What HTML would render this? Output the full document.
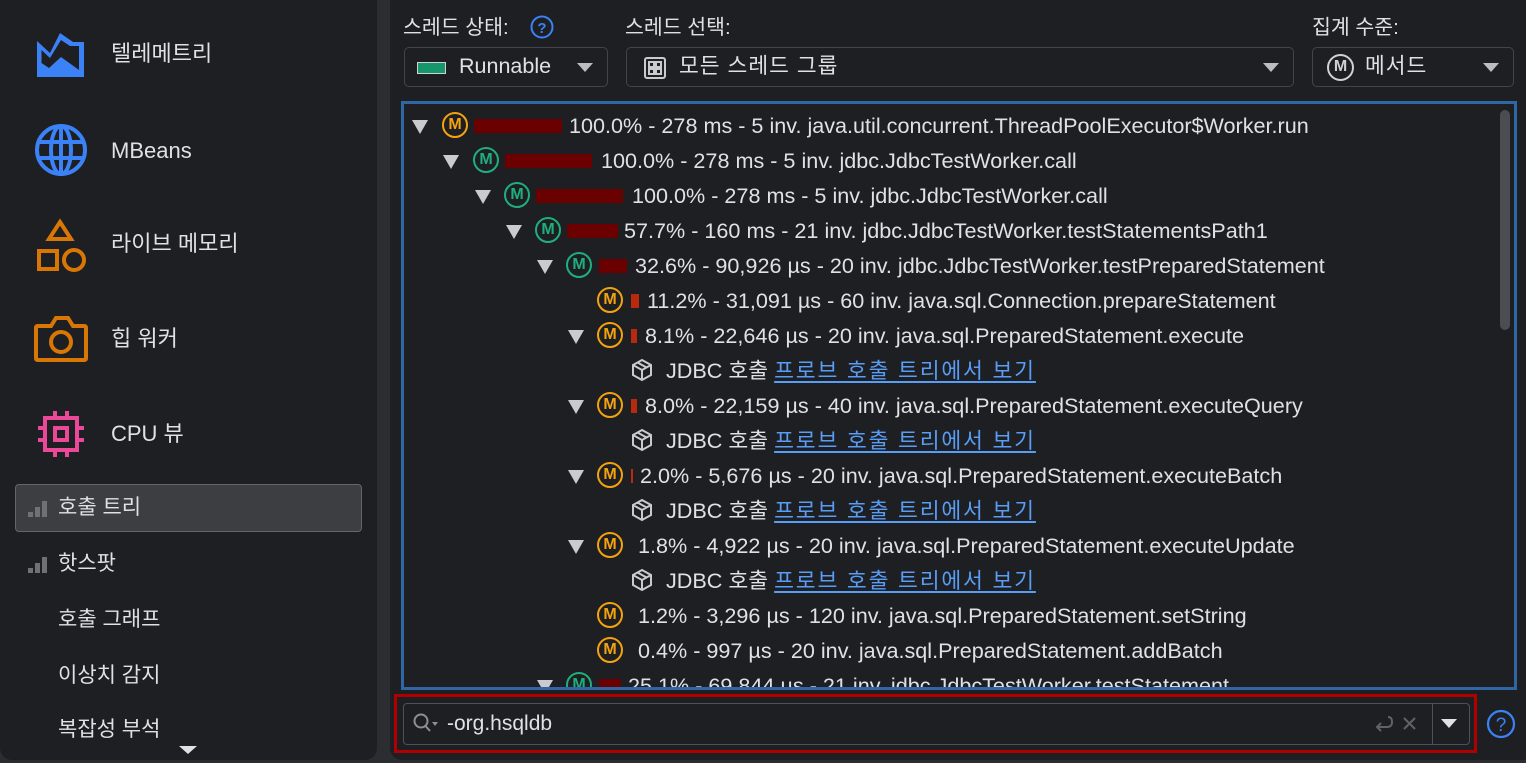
<!DOCTYPE html>
<html><head><meta charset="utf-8"><style>
*{margin:0;padding:0;box-sizing:border-box}
body{width:1526px;height:763px;background:#2b2d30;position:relative;overflow:hidden;font-family:"Liberation Sans","Noto Sans CJK KR",sans-serif;color:#dfe1e5}
.abs{position:absolute}
#left{left:0;top:-10px;width:377px;height:770px;background:#1e1f22;border-radius:12px}
#right{left:390px;top:-10px;width:1146px;height:770px;background:#1e1f22;border-radius:12px}
.nav{position:absolute;left:111px;font-size:22px;line-height:28px}
.sub{position:absolute;left:58px;font-size:21px;line-height:28px}
.lbl{position:absolute;font-size:20.5px;line-height:26px;top:15px}
.combo{position:absolute;top:47px;height:40px;border:1.5px solid #43454a;border-radius:5px;background:#1e1f22;font-size:21.5px;line-height:37px}
.dd{position:absolute;right:14px;top:15px;width:0;height:0;border-left:8px solid transparent;border-right:8px solid transparent;border-top:9px solid #bbbdc0}
#tree{left:401px;top:101px;width:1116px;height:589px;border:3px solid #2f67a6;overflow:hidden}
.row{position:absolute;height:26px;line-height:26px;font-size:21.6px;white-space:nowrap}
.tri{position:absolute;width:0;height:0;border-left:8px solid transparent;border-right:8px solid transparent;border-top:14px solid #c9cbce}
.m{position:absolute;width:26px;height:26px;border-radius:50%;border:2.5px solid;font-weight:bold;font-size:16px;line-height:21px;text-align:center;font-family:"Liberation Sans",sans-serif}
.o{color:#f2a30f;border-color:#f2a30f}
.g{color:#1faf7c;border-color:#1faf7c}
.bar{position:absolute;height:14px;background:#6b0000}
.a{color:#589df6;text-decoration:underline;text-underline-offset:3px;letter-spacing:1.8px}
.k{letter-spacing:1px}
</style></head><body>
<div id="left" class="abs"></div>
<div id="right" class="abs"></div>

<svg class="abs" style="left:36px;top:31px" width="50" height="47" viewBox="0 0 50 47"><path d="M1 10 L14 22 L24 2 L37 11 L48 11 L48 46 L1 46 Z" fill="#3b82f6"/><path d="M5.5 19 L14 27 L25 9 L34 15 L43 15 L43 39 L25 26 L13 37 L5.5 32 Z" fill="#1e1f22"/></svg>
<div class="nav" style="top:40px">텔레메트리</div>
<svg class="abs" style="left:33px;top:122px" width="56" height="56" viewBox="0 0 56 56" fill="none" stroke="#3b82f6" stroke-width="4"><circle cx="28" cy="28" r="24"/><ellipse cx="28" cy="28" rx="10" ry="24"/><line x1="4" y1="20" x2="52" y2="20"/><line x1="4" y1="36" x2="52" y2="36"/><line x1="28" y1="4" x2="28" y2="52"/></svg>
<div class="nav" style="top:137px">MBeans</div>
<svg class="abs" style="left:36px;top:218px" width="52" height="54" viewBox="0 0 52 54" fill="none" stroke="#d97706" stroke-width="4"><path d="M24 4 L35 21 L13 21 Z"/><rect x="3" y="33" width="18" height="18"/><circle cx="38" cy="42" r="10"/></svg>
<div class="nav" style="top:230px">라이브 메모리</div>
<svg class="abs" style="left:34px;top:314px" width="54" height="50" viewBox="0 0 54 50" fill="none" stroke="#d97706" stroke-width="4"><path d="M4 12 L17 12 L22 4 L34 4 L39 12 L50 12 Q52 12 52 14 L52 44 Q52 46 50 46 L4 46 Q2 46 2 44 L2 14 Q2 12 4 12 Z"/><circle cx="27" cy="28" r="10"/></svg>
<div class="nav" style="top:325px">힙 워커</div>
<svg class="abs" style="left:36px;top:409px" width="50" height="50" viewBox="0 0 50 50" fill="none" stroke="#ec4899" stroke-width="4"><rect x="9" y="9" width="32" height="32"/><rect x="19" y="19" width="12" height="12"/><path d="M19 2v7M31 2v7M19 41v7M31 41v7M2 19h7M2 31h7M41 19h7M41 31h7"/></svg>
<div class="nav" style="top:420px">CPU 뷰</div>

<div class="abs" style="left:15px;top:484px;width:347px;height:48px;background:#3c3e41;border:1.5px solid #62656a;border-radius:4px"></div>
<svg class="abs" style="left:28px;top:499px" width="20" height="20"><rect x="0" y="13" width="5" height="5" fill="#6f7175"/><rect x="7" y="8" width="5" height="10" fill="#6f7175"/><rect x="14" y="2" width="5" height="16" fill="#6f7175"/></svg>
<div class="sub" style="top:494px">호출 트리</div>
<svg class="abs" style="left:28px;top:555px" width="20" height="20"><rect x="0" y="13" width="5" height="5" fill="#6f7175"/><rect x="7" y="8" width="5" height="10" fill="#6f7175"/><rect x="14" y="2" width="5" height="16" fill="#6f7175"/></svg>
<div class="sub" style="top:550px">핫스팟</div>
<div class="sub" style="top:606px">호출 그래프</div>
<div class="sub" style="top:662px">이상치 감지</div>
<div class="sub" style="top:716px;height:24px;overflow:hidden">복잡성 부석</div>
<div class="abs" style="left:179px;top:746px;width:0;height:0;border-left:9px solid transparent;border-right:9px solid transparent;border-top:8px solid #dfe1e5"></div>

<div class="lbl" style="left:403px">스레드 상태:</div>
<svg class="abs" style="left:530px;top:15px" width="24" height="24"><circle cx="12" cy="12" r="10.5" fill="none" stroke="#3b82f6" stroke-width="2"/><text x="12" y="18" font-size="15" font-weight="bold" fill="#3b82f6" text-anchor="middle" font-family="Liberation Sans">?</text></svg>
<div class="lbl" style="left:625px">스레드 선택:</div>
<div class="lbl" style="left:1312px">집계 수준:</div>
<div class="combo" style="left:404px;width:204px"><div class="abs" style="left:12px;top:14px;width:29px;height:12px;background:#16976a;border:1px solid #cfd1d4"></div><span class="abs" style="left:54px">Runnable</span><div class="dd"></div></div>
<div class="combo" style="left:626px;width:668px"><svg class="abs" style="left:16px;top:8px" width="24" height="24" fill="none" stroke="#c9cbce" stroke-width="2"><rect x="2" y="2" width="20" height="20" rx="2"/><rect x="6" y="6" width="5" height="5"/><rect x="13" y="6" width="5" height="5"/><rect x="6" y="13" width="5" height="5"/><rect x="13" y="13" width="5" height="5"/></svg><span class="abs k" style="left:52px">모든 스레드 그룹</span><div class="dd"></div></div>
<div class="combo" style="left:1312px;width:202px"><div class="m" style="left:14px;top:6px;width:27px;height:27px;color:#cfd1d4;border-color:#cfd1d4;line-height:22px;font-size:16px">M</div><span class="abs k" style="left:52px">메서드</span><div class="dd"></div></div>

<div id="tree" class="abs"></div>
<div class="abs" style="left:1500px;top:110px;width:10px;height:220px;background:#4a4d51;border-radius:5px"></div>

<div class="abs" style="left:0;top:0;width:1526px;height:687px;clip-path:inset(104px 0 0 0)">
<div class="tri" style="left:412px;top:120px"></div><div class="m o" style="left:442px;top:112px">M</div><div class="bar" style="left:474px;top:119px;width:88px"></div><div class="row" style="left:569px;top:113px">100.0% - 278 ms - 5 inv. java.util.concurrent.ThreadPoolExecutor$Worker.run</div>

<div class="tri" style="left:443px;top:155px"></div><div class="m g" style="left:473px;top:147px">M</div><div class="bar" style="left:505px;top:154px;width:87px"></div><div class="row" style="left:601px;top:148px">100.0% - 278 ms - 5 inv. jdbc.JdbcTestWorker.call</div>

<div class="tri" style="left:475px;top:190px"></div><div class="m g" style="left:504px;top:182px">M</div><div class="bar" style="left:536px;top:189px;width:87px"></div><div class="row" style="left:632px;top:183px">100.0% - 278 ms - 5 inv. jdbc.JdbcTestWorker.call</div>

<div class="tri" style="left:506px;top:225px"></div><div class="m g" style="left:535px;top:217px">M</div><div class="bar" style="left:567px;top:224px;width:51px"></div><div class="row" style="left:624px;top:218px">57.7% - 160 ms - 21 inv. jdbc.JdbcTestWorker.testStatementsPath1</div>

<div class="tri" style="left:537px;top:260px"></div><div class="m g" style="left:566px;top:252px">M</div><div class="bar" style="left:599px;top:259px;width:28px"></div><div class="row" style="left:635px;top:253px">32.6% - 90,926 µs - 20 inv. jdbc.JdbcTestWorker.testPreparedStatement</div>

<div class="m o" style="left:597px;top:287px">M</div><div class="bar" style="left:631px;top:294px;width:8px;background:#b8290e"></div><div class="row" style="left:647px;top:288px">11.2% - 31,091 µs - 60 inv. java.sql.Connection.prepareStatement</div>

<div class="tri" style="left:568px;top:330px"></div><div class="m o" style="left:597px;top:322px">M</div><div class="bar" style="left:631px;top:329px;width:6px;background:#b8290e"></div><div class="row" style="left:645px;top:323px">8.1% - 22,646 µs - 20 inv. java.sql.PreparedStatement.execute</div>

<div class="row" style="left:630px;top:358px"><svg style="vertical-align:-4px" width="24" height="24" fill="none" stroke="#c9cbce" stroke-width="2"><path d="M12 2 L21 7 L21 17 L12 22 L3 17 L3 7 Z M3 7 L12 12 L21 7 M12 12 L12 22 M7.5 4.5 L16.5 9.5"/></svg>&nbsp; JDBC 호출 <span class="a">프로브 호출 트리에서 보기</span></div>

<div class="tri" style="left:568px;top:400px"></div><div class="m o" style="left:597px;top:392px">M</div><div class="bar" style="left:631px;top:399px;width:6px;background:#b8290e"></div><div class="row" style="left:645px;top:393px">8.0% - 22,159 µs - 40 inv. java.sql.PreparedStatement.executeQuery</div>

<div class="row" style="left:630px;top:428px"><svg style="vertical-align:-4px" width="24" height="24" fill="none" stroke="#c9cbce" stroke-width="2"><path d="M12 2 L21 7 L21 17 L12 22 L3 17 L3 7 Z M3 7 L12 12 L21 7 M12 12 L12 22 M7.5 4.5 L16.5 9.5"/></svg>&nbsp; JDBC 호출 <span class="a">프로브 호출 트리에서 보기</span></div>

<div class="tri" style="left:568px;top:470px"></div><div class="m o" style="left:597px;top:462px">M</div><div class="bar" style="left:631px;top:469px;width:2px;background:#b8290e"></div><div class="row" style="left:640px;top:463px">2.0% - 5,676 µs - 20 inv. java.sql.PreparedStatement.executeBatch</div>

<div class="row" style="left:630px;top:498px"><svg style="vertical-align:-4px" width="24" height="24" fill="none" stroke="#c9cbce" stroke-width="2"><path d="M12 2 L21 7 L21 17 L12 22 L3 17 L3 7 Z M3 7 L12 12 L21 7 M12 12 L12 22 M7.5 4.5 L16.5 9.5"/></svg>&nbsp; JDBC 호출 <span class="a">프로브 호출 트리에서 보기</span></div>

<div class="tri" style="left:568px;top:540px"></div><div class="m o" style="left:597px;top:532px">M</div><div class="row" style="left:638px;top:533px">1.8% - 4,922 µs - 20 inv. java.sql.PreparedStatement.executeUpdate</div>

<div class="row" style="left:630px;top:568px"><svg style="vertical-align:-4px" width="24" height="24" fill="none" stroke="#c9cbce" stroke-width="2"><path d="M12 2 L21 7 L21 17 L12 22 L3 17 L3 7 Z M3 7 L12 12 L21 7 M12 12 L12 22 M7.5 4.5 L16.5 9.5"/></svg>&nbsp; JDBC 호출 <span class="a">프로브 호출 트리에서 보기</span></div>

<div class="m o" style="left:597px;top:602px">M</div><div class="row" style="left:638px;top:603px">1.2% - 3,296 µs - 120 inv. java.sql.PreparedStatement.setString</div>
<div class="m o" style="left:597px;top:637px">M</div><div class="row" style="left:638px;top:638px">0.4% - 997 µs - 20 inv. java.sql.PreparedStatement.addBatch</div>

<div class="tri" style="left:537px;top:680px"></div><div class="m g" style="left:566px;top:672px">M</div><div class="bar" style="left:599px;top:679px;width:22px"></div><div class="row" style="left:628px;top:673px">25.1% - 69,844 µs - 21 inv. jdbc.JdbcTestWorker.testStatement</div>
</div>

<div class="abs" style="left:394px;top:694px;width:1083px;height:59px;border:3px solid #b00000"></div>
<div class="abs" style="left:403px;top:703px;width:1067px;height:42px;border:1.5px solid #4e5157;border-radius:4px;background:#1e1f22"></div>
<div class="abs" style="left:1432px;top:704px;width:1px;height:40px;background:#4e5157"></div>
<div class="abs" style="left:1441px;top:719px;width:0;height:0;border-left:8px solid transparent;border-right:8px solid transparent;border-top:9px solid #dfe1e5"></div>
<svg class="abs" style="left:412px;top:712px" width="30" height="24" fill="none" stroke="#8c8f94" stroke-width="2"><circle cx="9" cy="9" r="6.5"/><line x1="13.5" y1="14" x2="18" y2="19"/><path d="M20 10 L26 10 L23 14 Z" fill="#8c8f94" stroke="none"/></svg>
<div class="row" style="left:447px;top:711px;font-size:21px">-org.hsqldb</div>
<svg class="abs" style="left:1372px;top:713px" width="50" height="22" fill="none" stroke="#5f6267" stroke-width="2"><path d="M16 4 Q20 4 20 9 Q20 14 15 14 L5 14 M9 10 L5 14 L9 18"/><path d="M32 5 L43 16 M43 5 L32 16"/></svg>
<svg class="abs" style="left:1486px;top:709px" width="30" height="30"><circle cx="15" cy="15" r="13" fill="none" stroke="#3b82f6" stroke-width="2.2"/><text x="15" y="22" font-size="19" fill="#3b82f6" text-anchor="middle" font-family="Liberation Sans">?</text></svg>
</body></html>
